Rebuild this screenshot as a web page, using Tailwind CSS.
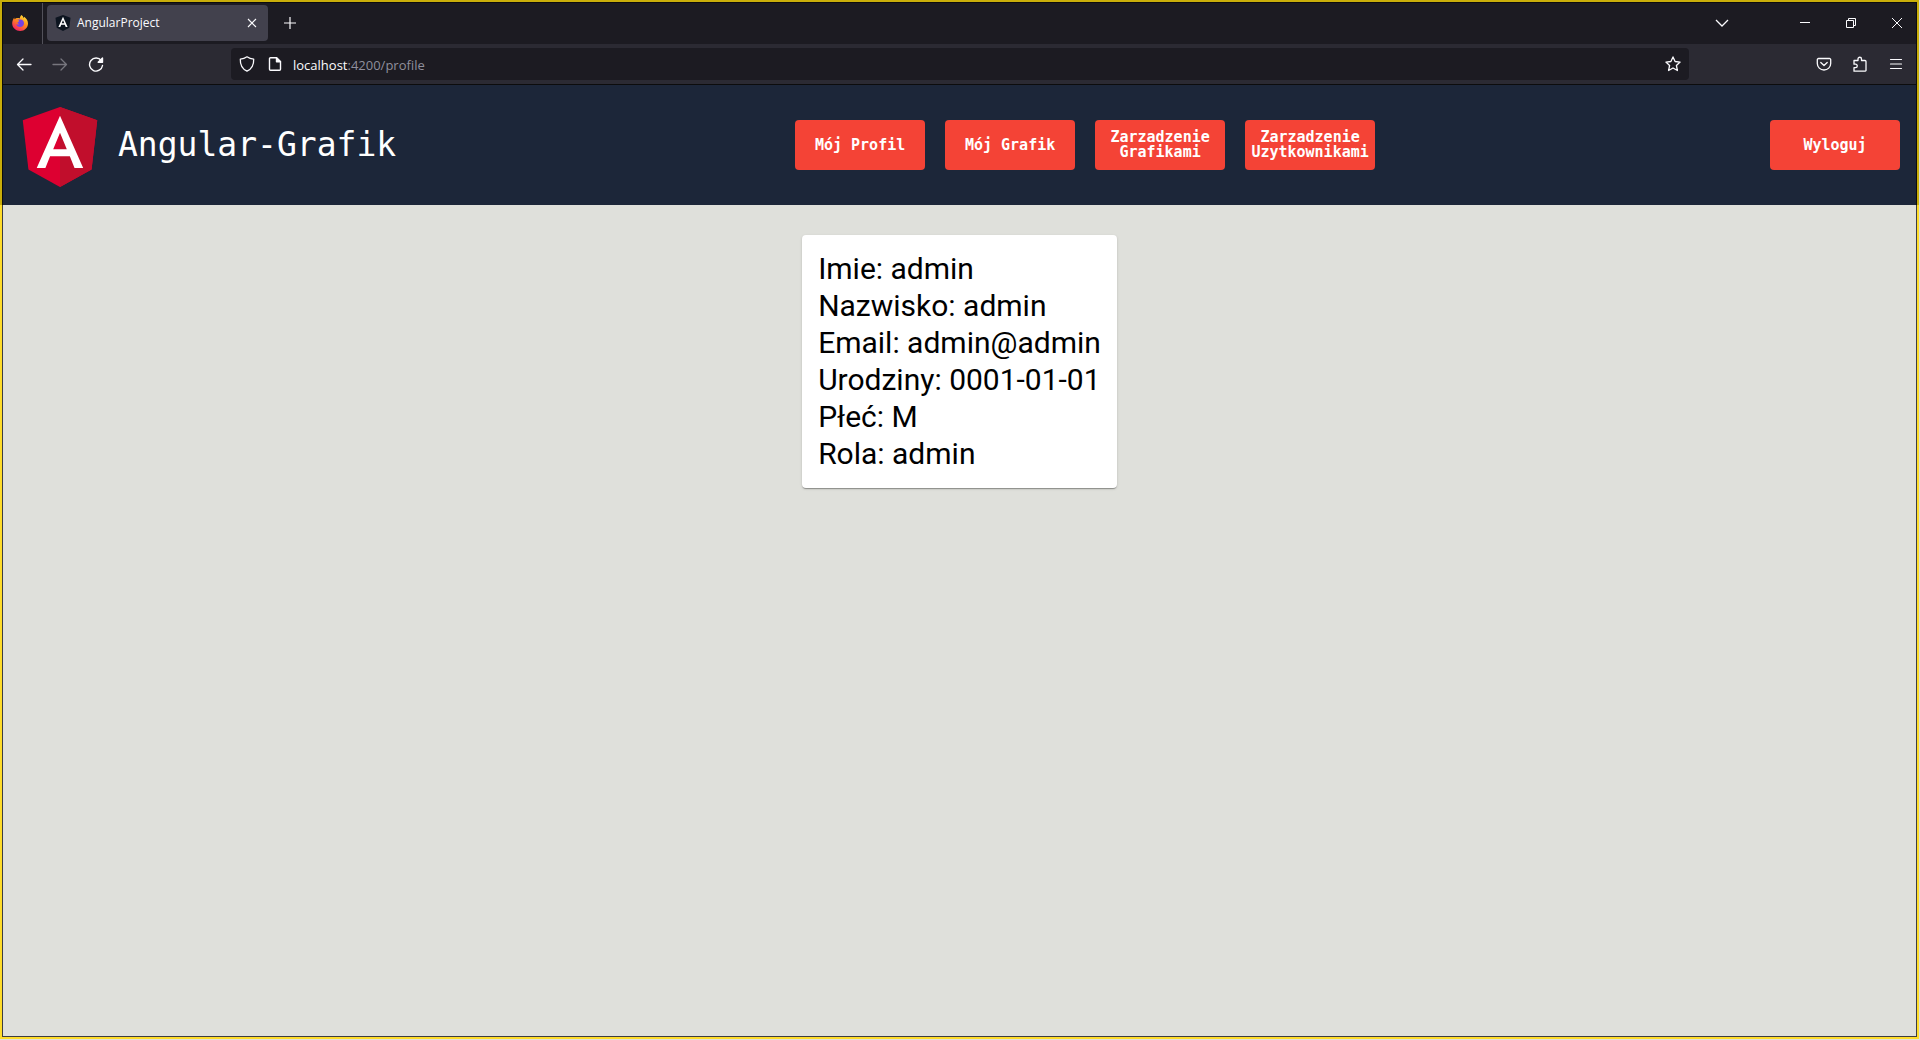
<!DOCTYPE html>
<html lang="pl">
<head>
<meta charset="utf-8">
<title>AngularProject</title>
<script src="https://cdn.jsdelivr.net/npm/@tailwindcss/browser@4"></script>
</head>
<body class="min-h-screen flex flex-col bg-[#dfe0db] pr-px pb-px">

<!-- Browser chrome -->
<div class="border-2 border-b-0 border-[#c9ae0a] font-['Open_Sans',sans-serif] text-[#fbfbfe]">
  <div class="border border-[#0c0c0d] bg-[#1c1b22]">
    <div class="flex h-[41px] items-center pb-0.5">
      <div class="flex h-[41px] w-10 items-center self-start border-r border-[#52515a] pb-0.5 pl-2">
        <svg class="size-[18px]" viewBox="0 0 18 18">
          <defs>
            <linearGradient id="flame" x1="0.8" y1="0" x2="0.2" y2="1"><stop offset="0" stop-color="#ffe83a"/><stop offset=".45" stop-color="#ff8a1c"/><stop offset="1" stop-color="#f5156c"/></linearGradient>
          </defs>
          <path d="M10.500 1c1.200.8 1.800 1.800 2 3 .5-.4.700-.8.700-1.200C15.600 4.600 17 7 17 9.500 17 13.600 13.500 17 9.200 17S1.200 13.700 1.200 9.500c0-2 .7-4.200 2-6 0 .8.200 1.200.6 1.700.6-.6 1.400-1 2.200-1.100 1-.2 2 0 2.800.3C8.900 3 9.500 1.800 10.500 1Z" fill="url(#flame)"/>
          <path d="M9.200 5.500c2.300 0 3.800 1.600 3.800 3.700s-1.600 3.800-3.900 3.800c-2 0-3.600-1.300-3.800-3 .9.700 2 .7 2.900 0-1-.3-1.600-.8-1.700-1.600 1.100-.3 1.600-1 1.400-1.900-.7-.3-1.300-.5-1.900-.4.900-.500 2-.6 3.200-.6Z" fill="#7542e5"/>
        </svg>
      </div>
      <div class="ml-1 flex h-9 w-[221px] items-center rounded bg-[#42414d] pl-2 pr-2">
        <svg class="size-4" viewBox="0 0 16 16"><path d="M8 0l7.500 2.700-1.200 10L8 16l-6.300-3.300-1.200-10z" fill="#0d1520"/><path d="M8 1.800 3.400 12.100h1.900l.9-2.300h3.600l.9 2.300h1.900zm0 3.500 1.300 3H6.700z" fill="#fff"/></svg>
        <span class="ml-1.5 flex-1 text-xs">AngularProject</span>
        <button aria-label="Zamknij kartę"><svg class="size-4" viewBox="0 0 16 16" fill="none" stroke="currentColor" stroke-width="1.100"><path d="m4 4 8 8M12 4l-8 8"/></svg></button>
      </div>
      <button class="ml-2.5 p-1" aria-label="Nowa karta"><svg class="size-4" viewBox="0 0 16 16" fill="none" stroke="currentColor" stroke-width="1.200"><path d="M8 2v12M2 8h12"/></svg></button>
      <div class="ml-auto flex items-center pr-[11px]">
        <button class="mr-[67px]" aria-label="Lista kart"><svg class="size-4" viewBox="0 0 16 16" fill="none" stroke="currentColor" stroke-width="1.300"><path d="m2 5 6 6 6-6"/></svg></button>
        <button class="mr-[30px]" aria-label="Minimalizuj"><svg class="size-4" viewBox="0 0 16 16" fill="none" stroke="currentColor"><path d="M3 7.500h10"/></svg></button>
        <button class="mr-[30px]" aria-label="Przywróć"><svg class="size-4" viewBox="0 0 16 16" fill="none" stroke="currentColor"><path d="M3.500 5.500h7v7h-7zM5.500 5.500v-2h7v7h-2"/></svg></button>
        <button aria-label="Zamknij"><svg class="size-4" viewBox="0 0 16 16" fill="none" stroke="currentColor"><path d="m3 3 10 10M13 3 3 13"/></svg></button>
      </div>
    </div>
    <div class="flex h-10 items-center bg-[#2b2a33]">
      <div class="flex w-[228px] shrink-0 items-center gap-5 pl-[13px]">
        <button aria-label="Wstecz"><svg class="size-4" viewBox="0 0 16 16" fill="none" stroke="currentColor" stroke-width="1.300" stroke-linecap="round" stroke-linejoin="round"><path d="M15 8.500H1.500M7 3 1.500 8.500 7 14"/></svg></button>
        <button class="text-[#77767e]" aria-label="Dalej"><svg class="size-4" viewBox="0 0 16 16" fill="none" stroke="currentColor" stroke-width="1.300" stroke-linecap="round" stroke-linejoin="round"><path d="M1 8.500h13.500M9 3l5.500 5.500L9 14"/></svg></button>
        <button aria-label="Odśwież"><svg class="size-4" viewBox="0 0 16 16" fill="none" stroke="currentColor" stroke-width="1.400" stroke-linecap="round"><path d="M13.300 4.700A6.500 6.500 0 1 0 14.500 9.500"/><path d="M14.500 2v4.300h-4.300z" fill="currentColor" stroke-linejoin="round"/></svg></button>
      </div>
      <div class="flex h-8 flex-1 items-center rounded bg-[#1c1b22] px-2">
        <svg class="size-4" viewBox="0 0 16 16" fill="none" stroke="currentColor" stroke-width="1.300" stroke-linejoin="round"><path d="M8 .8c2 1.400 4.200 2.100 6.700 2.300.2 5-1.200 9.500-6.700 12.100C2.500 12.600 1.100 8.100 1.300 3.100 3.800 2.900 6 2.200 8 .8Z"/></svg>
        <svg class="ml-3 size-4" viewBox="0 0 16 16" fill="none" stroke="currentColor" stroke-width="1.400" stroke-linejoin="round"><path d="M9.500 1.700H3.500a1 1 0 0 0-1 1v10.600a1 1 0 0 0 1 1h9a1 1 0 0 0 1-1V5.700z"/><path d="M9.500 1.700v4h4z" fill="currentColor"/></svg>
        <a href="/profile" class="ml-2.5 flex-1 pt-0.5 text-[13px] leading-5 text-[#8f8f9d]"><span class="text-[#fbfbfe]">localhost</span>:4200/profile</a>
        <button aria-label="Dodaj zakładkę"><svg class="size-4" viewBox="0 0 16 16" fill="none" stroke="currentColor" stroke-width="1.300" stroke-linejoin="round"><path d="m8 .9 2.100 4.600 5 .6-3.700 3.400 1 5L8 12l-4.400 2.500 1-5L.9 6.100l5-.6z"/></svg></button>
      </div>
      <div class="flex w-[227px] shrink-0 items-center justify-end gap-5 pr-3">
        <button aria-label="Pocket"><svg class="size-4" viewBox="0 0 16 16" fill="none" stroke="currentColor" stroke-width="1.300" stroke-linecap="round" stroke-linejoin="round"><path d="M2.500 2.500h11a1.200 1.200 0 0 1 1.200 1.200V7.500a6.700 6.500 0 0 1-13.400 0V3.700a1.200 1.200 0 0 1 1.200-1.200Z"/><path d="m4.800 6.500 3.200 3 3.200-3"/></svg></button>
        <button aria-label="Rozszerzenia"><svg class="size-4" viewBox="0 0 16 16" fill="none" stroke="currentColor" stroke-width="1.300" stroke-linejoin="round"><path d="M2 4.500h4V3a1.700 1.700 0 0 1 3.500 0v1.500h3.500a1 1 0 0 1 1 1v9a1 1 0 0 1-1 .7H2v-3.500h1.500a1.700 1.700 0 0 0 0-3.500H2z"/></svg></button>
        <button aria-label="Menu"><svg class="size-4" viewBox="0 0 16 16" fill="none" stroke="currentColor" stroke-width="1.200" stroke-linecap="round"><path d="M2.500 3.500h11M2.500 8h11M2.500 12.500h11"/></svg></button>
      </div>
    </div>
  </div>
</div>

<!-- Application header -->
<div class="border-x-2 border-[#c9ae0a]">
  <header class="flex h-[120px] items-center justify-between border-x border-[#0c0c0d] bg-[#1c2639] pl-[7px] pr-4 font-['DejaVu_Sans_Mono',monospace] text-white">
    <div class="flex items-center gap-2">
      <svg class="size-[100px]" viewBox="0 0 250 250"><path fill="#dd0031" d="M125 30 31.900 63.200l14.200 123.100L125 230l78.900-43.700 14.200-123.100z"/><path fill="#c10e2c" d="M125 30v22.200-.1V230l78.900-43.700 14.200-123.100z"/><path fill="#fff" d="M125 52.100 66.800 182.600h21.700l11.700-29.200h49.400l11.700 29.200H183zm17 83.300h-34l17-40.900z"/></svg>
      <h1 class="pr-1 text-[33px] leading-10">Angular-Grafik</h1>
    </div>
    <nav class="flex gap-5 text-[15px] font-bold leading-[15px]">
      <button class="h-[50px] w-[130px] rounded bg-[#f44336]">Mój Profil</button>
      <button class="h-[50px] w-[130px] rounded bg-[#f44336]">Mój Grafik</button>
      <button class="h-[50px] w-[130px] rounded bg-[#f44336]">Zarzadzenie Grafikami</button>
      <button class="h-[50px] w-[130px] rounded bg-[#f44336]">Zarzadzenie Uzytkownikami</button>
    </nav>
    <button class="h-[50px] w-[130px] rounded bg-[#f44336] text-[15px] font-bold leading-[15px]">Wyloguj</button>
  </header>
</div>

<!-- Profile page -->
<div class="flex flex-1 flex-col border-2 border-t-0 border-[#fedc2a]">
  <main class="flex flex-1 items-start justify-center border border-t-0 border-[#3c3d40] bg-[#dfe0db] pt-[30px]">
    <section class="rounded bg-white px-4 pt-[15px] pb-4 font-[Roboto,sans-serif] text-[30px] leading-[37px] text-black shadow-[0_2px_1px_-1px_rgba(0,0,0,0.2),0_1px_1px_0_rgba(0,0,0,0.14),0_1px_3px_0_rgba(0,0,0,0.12)]">
      <p>Imie: admin</p>
      <p>Nazwisko: admin</p>
      <p>Email: admin@admin</p>
      <p>Urodziny: 0001-01-01</p>
      <p>Płeć: M</p>
      <p>Rola: admin</p>
    </section>
  </main>
</div>
</body>
</html>
